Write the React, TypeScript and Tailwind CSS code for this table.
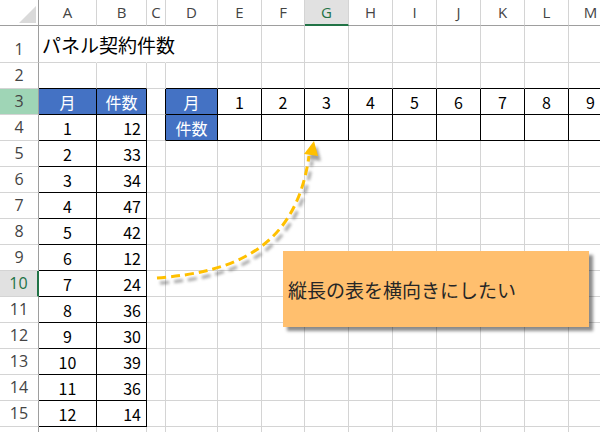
import React from 'react';

const COLS = ['A', 'B', 'C', 'D', 'E', 'F', 'G', 'H', 'I', 'J', 'K', 'L', 'M'];
const COUNTS = [12, 33, 34, 47, 42, 12, 24, 36, 30, 39, 36, 14];
const ROWS = Array.from({ length: 16 }, (_, i) => i + 1);

type CellInfo = {
  text?: string;
  align: 'left' | 'center' | 'right';
  blue?: boolean;
  rightBlack?: boolean;
  bottomBlack?: boolean;
  hideRight?: boolean;
  title?: boolean;
};

function getCell(r: number, c: number): CellInfo {
  const info: CellInfo = { align: 'center' };
  const t1 = c <= 1;
  const t2 = c >= 3;

  if (t1 && r >= 2 && r <= 15) info.bottomBlack = true;
  if (t2 && r >= 2 && r <= 4) info.bottomBlack = true;
  if (t1 && r >= 3 && r <= 15) info.rightBlack = true;
  if (c >= 2 && r >= 3 && r <= 4) info.rightBlack = true;

  // title row overflows into B..D
  if (r === 1 && c <= 2) info.hideRight = true;
  if (r === 1 && c === 0) {
    info.text = 'パネル契約件数';
    info.align = 'left';
    info.title = true;
  }

  if (r === 3) {
    if (c === 0 || c === 3) { info.text = '月'; info.blue = true; }
    if (c === 1) { info.text = '件数'; info.blue = true; }
    if (c >= 4) info.text = String(c - 3);
  }
  if (r === 4 && c === 3) { info.text = '件数'; info.blue = true; }
  if (r >= 4 && r <= 15) {
    if (c === 0) info.text = String(r - 3);
    if (c === 1) { info.text = String(COUNTS[r - 4]); info.align = 'right'; }
  }
  return info;
}

function Cell({ r, c }: { r: number; c: number }) {
  const info = getCell(r, c);
  const right = info.hideRight
    ? 'border-r-transparent'
    : info.rightBlack
    ? 'border-r-black'
    : 'border-r-[#d4d4d4]';
  const bottom = info.bottomBlack ? 'border-b-black' : 'border-b-[#d4d4d4]';
  const justify =
    info.align === 'left' ? 'justify-start pl-[3px]' : info.align === 'right' ? 'justify-end pr-[5px]' : 'justify-center';
  return (
    <div
      className={`box-border border-r border-b ${right} ${bottom} flex items-center ${justify} ${
        info.blue ? 'bg-[#4472c4] text-white' : 'text-black'
      }`}
    >
      {info.text && (
        <span
          className={`whitespace-nowrap relative z-10 ${info.title ? 'text-[19px]' : 'text-[16px]'} leading-none`}
        >
          {info.text}
        </span>
      )}
    </div>
  );
}

function RowHeader({ r }: { r: number }) {
  const cls =
    r === 10
      ? 'bg-[#e1e1e1] text-[#217346] border-r-2 border-r-[#217346]'
      : r === 3
      ? 'bg-[#9fd5b6] text-[#444] border-r border-r-[#9e9e9e]'
      : 'bg-white text-[#444] border-r border-r-[#9e9e9e]';
  return (
    <div className={`box-border border-b border-b-[#d4d4d4] ${cls} flex items-end justify-center`}>
      <span className="text-[16px] leading-[26px] font-['Open_Sans',sans-serif]">{r}</span>
    </div>
  );
}

function ColHeader({ name }: { name: string }) {
  const sel = name === 'G';
  return (
    <div
      className={`box-border border-r border-r-[#d4d4d4] flex items-center justify-center ${
        sel
          ? 'bg-[#e1e1e1] text-[#217346] border-b-2 border-b-[#217346]'
          : 'bg-white text-[#444] border-b border-b-[#9e9e9e]'
      }`}
    >
      <span className="text-[15px] leading-none font-['Open_Sans',sans-serif]">{name}</span>
    </div>
  );
}

export default function App() {
  return (
    <div className="relative w-[600px] h-[432px] overflow-hidden bg-white font-['Noto_Sans_CJK_JP',sans-serif]">
      <div className="grid grid-cols-[39px_58px_50px_19px_52px_44px_43px_44px_44px_44px_44px_44px_44px_44px] grid-rows-[26px_37px_repeat(15,26px)]">
        {/* corner */}
        <div className="box-border border-r border-b border-r-[#9e9e9e] border-b-[#9e9e9e] relative">
          <svg className="absolute inset-0" width="39" height="26">
            <polygon points="19,23 36,23 36,6" fill="#dadada" />
          </svg>
        </div>
        {COLS.map((c) => (
          <ColHeader key={c} name={c} />
        ))}
        {ROWS.map((r) => (
          <React.Fragment key={r}>
            <RowHeader r={r} />
            {COLS.map((_, ci) => (
              <Cell key={ci} r={r} c={ci} />
            ))}
          </React.Fragment>
        ))}
      </div>

      {/* dashed arrow */}
      <svg className="absolute inset-0 pointer-events-none" width="600" height="432">
        <defs>
          <filter id="sh" x="-20%" y="-20%" width="140%" height="140%">
            <feGaussianBlur stdDeviation="1.6" />
          </filter>
        </defs>
        <g transform="translate(3,5)" filter="url(#sh)" opacity="0.55">
          <path d="M157,278 C235,272 296,248 309,156" fill="none" stroke="#555" strokeWidth="3" strokeDasharray="9 5" />
          <polygon points="314,141 304,154 318,156" fill="#555" />
        </g>
        <path d="M157,278 C235,272 296,248 309,156" fill="none" stroke="#ffc000" strokeWidth="3" strokeDasharray="9 5" />
        <polygon points="314,141 304,154 318,156" fill="#ffc000" />
      </svg>

      {/* callout */}
      <div className="absolute left-[283px] top-[251px] w-[306px] h-[76px] bg-[#ffbf6e] shadow-[4px_4px_3px_rgba(0,0,0,0.45)] flex items-center pl-[5px]">
        <span className="text-[19px] text-[#262626] leading-none">縦長の表を横向きにしたい</span>
      </div>
    </div>
  );
}
